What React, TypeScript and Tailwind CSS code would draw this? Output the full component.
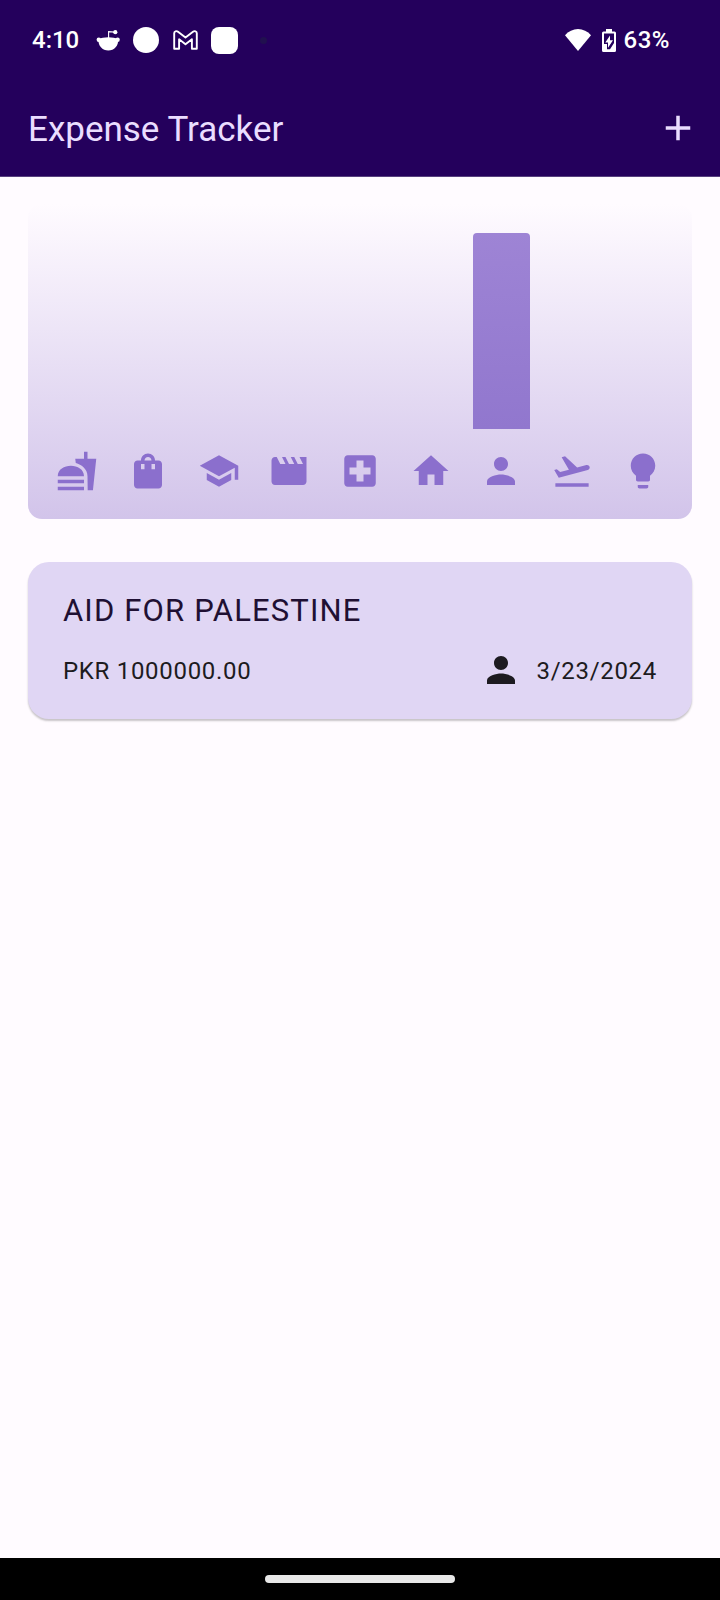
import React from "react";
import {
  MdSchool,
  MdMovie,
  MdLocalHospital,
  MdHome,
  MdPerson,
  MdLightbulb,
  MdAdd,
} from "react-icons/md";

type IconProps = { className?: string };

function FastFoodIcon({ className }: IconProps) {
  return (
    <svg className={className} viewBox="0 0 24 24" fill="currentColor">
      <path d="M1 21h15v2H1zM1 17h15v2H1zM16 15c0-8-15-8-15 0zM18.100 23h3L23 5.050h-5V1h-2v4.050h-5l.3 2.340c1.710.47 3.310 1.320 4.270 2.260 1.440 1.420 2.430 2.890 2.430 5.290z" />
    </svg>
  );
}

function BagIcon({ className }: IconProps) {
  return (
    <svg className={className} viewBox="0 0 24 24" fill="currentColor" fillRule="evenodd">
      <path d="M18 6h-2c0-2.210-1.790-4-4-4S8 3.790 8 6H6c-1.100 0-2 .9-2 2v12c0 1.100.9 2 2 2h12c1.100 0 2-.9 2-2V8c0-1.100-.9-2-2-2zm-6-2c1.100 0 2 .9 2 2h-4c0-1.100.9-2 2-2zM8 8h2v3H8zM14 8h2v3h-2z" />
    </svg>
  );
}

function TakeoffIcon({ className }: IconProps) {
  return (
    <svg className={className} viewBox="0 0 24 24" fill="currentColor">
      <path d="M2.500 19h19v2h-19zM22.070 9.640c-.21-.8-1.040-1.280-1.840-1.060L14.920 10l-6.900-6.430-1.930.51 4.140 7.170-4.970 1.330-1.970-1.540-1.450.39 2.590 4.490 16.580-4.440c.81-.23 1.280-1.050 1.060-1.840z" />
    </svg>
  );
}

const categories = [
  { name: "food", Icon: FastFoodIcon, fill: 0 },
  { name: "shopping", Icon: BagIcon, fill: 0 },
  { name: "education", Icon: MdSchool, fill: 0 },
  { name: "movies", Icon: MdMovie, fill: 0 },
  { name: "health", Icon: MdLocalHospital, fill: 0 },
  { name: "home", Icon: MdHome, fill: 0 },
  { name: "personal", Icon: MdPerson, fill: 1 },
  { name: "travel", Icon: TakeoffIcon, fill: 0 },
  { name: "utilities", Icon: MdLightbulb, fill: 0 },
];

function StatusBar() {
  return (
    <div className="flex h-[80px] items-center pl-[32px] pr-[50px] text-white">
      <span className="w-[64px] text-[24px] font-medium leading-none">4:10</span>
      <svg className="h-[26px] w-[24px]" viewBox="0 0 24 26" fill="currentColor">
        <path d="M2.500 12.200C5 11 8.500 10.300 12.300 10.300s7.300.7 9.800 1.900c.7 6.500-4 11.300-9.800 11.300S1.800 18.700 2.500 12.200z" />
        <circle cx="2.800" cy="12.700" r="2.200" />
        <circle cx="21.600" cy="12.700" r="2.200" />
        <circle cx="19.300" cy="5.200" r="2.100" />
        <path d="M12.600 11V4.600l6.200.5" fill="none" stroke="currentColor" strokeWidth="1.100" />
      </svg>
      <div className="ml-[13px] h-[26px] w-[26px] rounded-full bg-white" />
      <svg className="ml-[14px] h-[20px] w-[25px]" viewBox="0 0 25 20" fill="none" stroke="currentColor" strokeWidth="1.900" strokeLinejoin="round">
        <path d="M1.200 18.700V3.200C1.200 1.200 3.500.6 5 1.800l7.500 5.800L20 1.800c1.500-1.200 3.800-.6 3.800 1.400v15.500h-4.900V9.300l-6.400 4.900-6.400-4.900v9.400z" />
      </svg>
      <div className="ml-[13px] h-[27px] w-[27px] rounded-[8px] bg-white" />
      <div className="ml-[22px] h-[7px] w-[7px] rounded-full bg-[#21104f]" />
      <div className="ml-auto flex items-center">
        <svg className="h-[22px] w-[26px]" viewBox="0 0 26 22" fill="currentColor">
          <path d="M13 22L0 6.200C3.500 2.300 8 0 13 0s9.500 2.300 13 6.200z" />
        </svg>
        <svg className="ml-[11px] h-[23px] w-[14px]" viewBox="0 0 14 23">
          <path d="M4 0h6v2.500h2.500A1.500 1.500 0 0 1 14 4v17.500a1.500 1.500 0 0 1-1.500 1.500h-11A1.500 1.500 0 0 1 0 21.500V4a1.500 1.500 0 0 1 1.500-1.500H4z" fill="#fff" />
          <path d="M2 4.600h10V14L8 20.300H5V15H2z" fill="#24005c" />
          <path d="M8 6.500v4.700h3L6 18.700v-5.200H3.300z" fill="#fff" />
        </svg>
        <span className="ml-[8px] text-[24px] font-medium leading-none tracking-[0.500px]">63%</span>
      </div>
    </div>
  );
}

function Chart() {
  return (
    <section className="flex h-[315px] flex-col rounded-[14px] bg-linear-to-b from-[#fffbff] to-[#d2c4ea] px-[14px] pt-[29px]">
      <div className="grid h-[196px] grid-cols-9 items-end">
        {categories.map(({ name, fill }) => (
          <div key={name} className="flex h-full items-end px-[7px]">
            <div
              className="w-full rounded-t-[4px] bg-linear-to-b from-[#9e84d5] to-[#9177ce]"
              style={{ height: `${fill * 100}%` }}
            />
          </div>
        ))}
      </div>
      <div className="mt-[21px] grid grid-cols-9 justify-items-center text-[#8b6fcd]">
        {categories.map(({ name, Icon }) => (
          <Icon key={name} className="h-[42px] w-[42px]" />
        ))}
      </div>
    </section>
  );
}

function ExpenseCard() {
  return (
    <article className="mt-[43px] h-[157px] rounded-[21px] bg-[#e0d6f4] px-[35px] pt-[29px] text-[#1d1b20] shadow-[0_2px_2px_rgba(0,0,0,0.22)]">
      <h2 className="text-[31px] leading-[40px] tracking-[1.150px] text-[#1f1033]">AID FOR PALESTINE</h2>
      <div className="mt-[19px] flex items-center justify-between">
        <span className="text-[24px] leading-[42px] tracking-[0.700px]">PKR 1000000.00</span>
        <span className="flex items-center">
          <MdPerson className="-mt-[2px] h-[42px] w-[42px]" />
          <span className="ml-[14px] text-[24px] leading-[42px] tracking-[0.700px]">3/23/2024</span>
        </span>
      </div>
    </article>
  );
}

export default function App() {
  return (
    <div className="flex h-[1600px] w-[720px] flex-col bg-[#fffbff] font-[Roboto,sans-serif]">
      <header className="flex h-[177px] flex-col border-b border-[#57407e] bg-[#24005c]">
        <StatusBar />
        <div className="flex flex-1 items-center justify-between pl-[28px] pr-[21px] text-[#eaddff]">
          <h1 className="pt-[2px] text-[35px] leading-none">Expense Tracker</h1>
          <MdAdd className="h-[42px] w-[42px]" />
        </div>
      </header>
      <main className="flex-1 px-[28px] pt-[27px]">
        <Chart />
        <ExpenseCard />
      </main>
      <footer className="flex h-[42px] items-center justify-center bg-black">
        <div className="h-[8px] w-[190px] rounded-full bg-[#e8e8e8]" />
      </footer>
    </div>
  );
}
